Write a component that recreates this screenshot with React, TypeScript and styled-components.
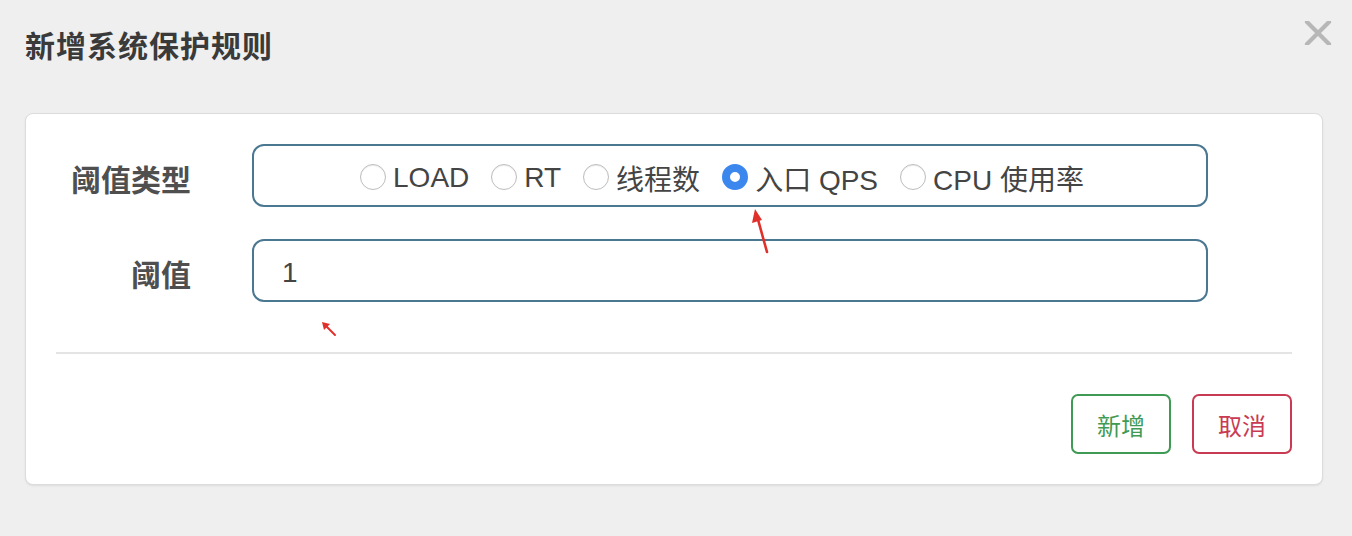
import React from 'react';
import styled, { createGlobalStyle } from 'styled-components';

const GlobalStyle = createGlobalStyle`
  html, body {
    margin: 0;
    padding: 0;
    background: #efefef;
  }
  body {
    font-family: "Liberation Sans", "Noto Sans CJK SC", sans-serif;
  }
`;

const options = ['LOAD', 'RT', '线程数', '入口 QPS', 'CPU 使用率'];

export default function App() {
  return (
    <>
      <GlobalStyle />
      <Page>
        <Header>
          <Title>新增系统保护规则</Title>
          <Close aria-label="close">
            <svg width="28" height="24" viewBox="0 0 28 24">
              <path d="M3 1 L25 23 M25 1 L3 23" stroke="#b7b7b7" strokeWidth="4.2" strokeLinecap="round" />
            </svg>
          </Close>
        </Header>
        <Card>
          <Form>
            <Label>阈值类型</Label>
            <RadioBox>
              {options.map((o) => (
                <RadioItem key={o}>
                  <Radio $checked={o === '入口 QPS'} />
                  <span>{o}</span>
                </RadioItem>
              ))}
            </RadioBox>
            <Label>阈值</Label>
            <Input defaultValue="1" />
          </Form>
          <Divider />
          <Footer>
            <Button $color="#3f9a54">新增</Button>
            <Button $color="#c93b52">取消</Button>
          </Footer>
        </Card>
        <Arrow style={{ left: 748, top: 206 }} width="26" height="50" viewBox="0 0 26 50">
          <path d="M19 46 L9 10" stroke="#e0302a" strokeWidth="2.6" strokeLinecap="round" />
          <path d="M7 3 L4 17 L14 14 Z" fill="#e0302a" />
        </Arrow>
        <Arrow style={{ left: 318, top: 318 }} width="22" height="22" viewBox="0 0 22 22">
          <path d="M17 17 L7 7" stroke="#e0302a" strokeWidth="2" strokeLinecap="round" />
          <path d="M4 4 L12 6 L6 12 Z" fill="#e0302a" />
        </Arrow>
      </Page>
    </>
  );
}

const Page = styled.div`
  position: relative;
  width: 1352px;
  height: 536px;
  overflow: hidden;
`;

const Header = styled.div`
  display: flex;
  justify-content: space-between;
  align-items: flex-start;
  height: 113px;
  padding: 0 20px 0 25px;
  box-sizing: border-box;
`;

const Title = styled.h4`
  margin: 29px 0 0;
  font-size: 30px;
  line-height: 36px;
  font-weight: bold;
  color: #3a3a3a;
  letter-spacing: 1px;
`;

const Close = styled.button`
  margin-top: 21px;
  border: 0;
  padding: 0;
  background: none;
  cursor: pointer;
`;

const Card = styled.div`
  margin: 0 29px 0 25px;
  height: 372px;
  box-sizing: border-box;
  background: #fff;
  border: 1px solid #dcdcdc;
  border-radius: 8px;
  box-shadow: 0 1px 2px rgba(0, 0, 0, 0.08);
  padding: 30px 0 0;
`;

const Form = styled.div`
  display: grid;
  grid-template-columns: 140px 956px;
  column-gap: 61px;
  row-gap: 32px;
  padding-left: 25px;
  align-items: center;
`;

const Label = styled.label`
  text-align: right;
  font-size: 30px;
  font-weight: bold;
  color: #4f4f4f;
  padding-top: 4px;
`;

const RadioBox = styled.div`
  height: 63px;
  box-sizing: border-box;
  border: 2px solid #4b7891;
  border-radius: 12px;
  display: flex;
  justify-content: center;
  align-items: center;
  gap: 22px;
  padding-right: 16px;
  font-size: 28px;
  color: #444;
`;

const RadioItem = styled.span`
  display: flex;
  align-items: center;
  gap: 7px;

  & > span:last-child {
    padding-top: 4px;
  }
`;

const Radio = styled.span<{ $checked?: boolean }>`
  width: 26px;
  height: 26px;
  box-sizing: border-box;
  border-radius: 50%;
  border: ${(p) => (p.$checked ? '8.5px solid #3b87ee' : '1px solid #bdbdbd')};
  background: #fff;
  box-shadow: ${(p) => (p.$checked ? 'none' : 'inset 0 1px 1px rgba(0,0,0,0.08)')};
  margin-top: 3px;
`;

const Input = styled.input`
  height: 63px;
  box-sizing: border-box;
  border: 2px solid #4b7891;
  border-radius: 12px;
  padding: 4px 26px 0 28px;
  font-family: "Liberation Sans", "Noto Sans CJK SC", sans-serif;
  font-size: 28px;
  color: #444;
  outline: none;
`;

const Divider = styled.div`
  margin: 50px 30px 0;
  height: 2px;
  background: #e4e4e4;
`;

const Footer = styled.div`
  display: flex;
  justify-content: flex-end;
  gap: 21px;
  padding: 40px 30px 0;
`;

const Button = styled.button<{ $color: string }>`
  width: 100px;
  height: 60px;
  box-sizing: border-box;
  border: 2px solid ${(p) => p.$color};
  color: ${(p) => p.$color};
  background: #fff;
  border-radius: 7px;
  font-family: "Liberation Sans", "Noto Sans CJK SC", sans-serif;
  font-size: 24px;
  cursor: pointer;
`;

const Arrow = styled.svg`
  position: absolute;
`;
